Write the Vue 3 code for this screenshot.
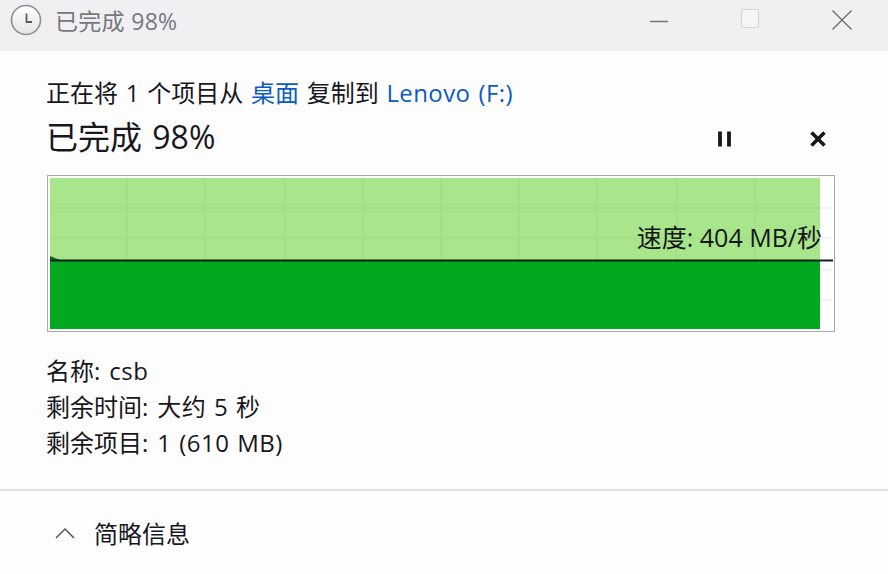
<template>
  <div class="dialog">
    <!-- title bar -->
    <header class="titlebar">
      <svg class="clock" width="32" height="32" viewBox="0 0 32 32">
        <defs>
          <linearGradient id="clockFace" x1="0" y1="0" x2="0" y2="1">
            <stop offset="0" stop-color="#ffffff" />
            <stop offset="1" stop-color="#e4e4e6" />
          </linearGradient>
        </defs>
        <circle cx="16" cy="16" r="14.5" fill="url(#clockFace)" stroke="#8f8f93" stroke-width="1.6" />
        <path d="M16.5 9.5V18H22" fill="none" stroke="#5c5c62" stroke-width="1.8" />
      </svg>
      <span class="title-text">已完成 98%</span>
      <div class="window-buttons">
        <svg class="win-btn" width="24" height="24" viewBox="0 0 24 24">
          <path d="M4 12.5H22" stroke="#77777c" stroke-width="1.5" />
        </svg>
        <svg class="win-btn" width="24" height="24" viewBox="0 0 24 24">
          <rect x="3.5" y="0.5" width="17" height="18" rx="2" fill="#f5f5f6" stroke="#d6d6d8" stroke-width="1.2" />
        </svg>
        <svg class="win-btn" width="24" height="24" viewBox="0 0 24 24">
          <path d="M2.5 1.5L21.5 20.5M21.5 1.5L2.5 20.5" stroke="#66666c" stroke-width="1.2" />
        </svg>
      </div>
    </header>

    <main class="content">
      <div class="copy-line">
        正在将 1 个项目从 <span class="link">桌面</span> 复制到 <span class="link latin">Lenovo (F:)</span>
      </div>

      <div class="heading-row">
        <div class="heading">已完成 98%</div>
        <div class="controls">
          <svg width="18" height="18" viewBox="0 0 18 18">
            <path d="M4 1.5V16.5M13 1.5V16.5" stroke="#17171c" stroke-width="3.8" />
          </svg>
          <svg width="18" height="18" viewBox="0 0 18 18">
            <path d="M2.5 2.5L15.5 15.5M15.5 2.5L2.5 15.5" stroke="#17171c" stroke-width="3.6" />
          </svg>
        </div>
      </div>

      <div class="chart">
        <svg class="chart-svg" width="786" height="155" viewBox="0 0 786 155">
          <rect x="2" y="2" width="770" height="82" fill="#a8e58b" />
          <path v-for="x in gridX" :key="x" :d="`M${x} 2V84`" stroke="#99dc7f" stroke-width="1" />
          <path v-for="y in gridY" :key="y" :d="`M2 ${y}H772`" stroke="#99dc7f" stroke-width="1" />
          <path v-for="y in ticks" :key="'t' + y" :d="`M772 ${y}H784`" stroke="#e6e6e6" stroke-width="1" />
          <rect x="2" y="84" width="770" height="69" fill="#02a81e" />
          <path d="M2 84V80L12 84Z" fill="#066b22" />
          <path d="M2 84.5H785" stroke="#15201a" stroke-width="2" />
        </svg>
        <span class="speed">速度: 404 MB/秒</span>
      </div>

      <dl class="details">
        <div v-for="row in details" :key="row.label" class="detail-row">
          <dt>{{ row.label }}:</dt>
          <dd>{{ row.value }}</dd>
        </div>
      </dl>
    </main>

    <footer class="footer">
      <svg width="20" height="12" viewBox="0 0 20 12">
        <path d="M1 11L10 2L19 11" fill="none" stroke="#55555b" stroke-width="1.5" />
      </svg>
      <span class="footer-text">简略信息</span>
    </footer>
  </div>
</template>

<script setup>
const gridX = [79, 157, 237, 315, 393, 471, 549, 629, 707]
const gridY = [32, 62]
const ticks = [32, 62, 94, 124]

const details = [
  { label: '名称', value: 'csb' },
  { label: '剩余时间', value: '大约 5 秒' },
  { label: '剩余项目', value: '1 (610 MB)' }
]
</script>

<style scoped>
.dialog {
  width: 888px;
  height: 574px;
  display: flex;
  flex-direction: column;
  background: #fdfdfe;
  color: #17171c;
  font-family: "Open Sans", "Noto Sans CJK SC", sans-serif;
  overflow: hidden;
}

.titlebar {
  height: 51px;
  box-sizing: border-box;
  flex: none;
  display: flex;
  align-items: center;
  padding: 0 0 10px 10px;
  background: #f0f0f2;
}

.clock {
  margin: 0 13px 1px 0;
}

.title-text {
  font-size: 23px;
  letter-spacing: 0.3px;
  color: #77777d;
  margin-bottom: 2px;
}

.window-buttons {
  margin-left: auto;
  display: flex;
  gap: 68px;
  padding-right: 34px;
}

.win-btn {
  display: block;
}

.content {
  flex: 1;
  padding: 24px 53px 0 47px;
}

.copy-line {
  font-size: 24px;
  line-height: 36px;
  word-spacing: 1.5px;
  margin-left: -1px;
}

.link {
  color: #0a5cc2;
}

.latin {
  letter-spacing: 0.4px;
}

.heading-row {
  display: flex;
  align-items: center;
  height: 50px;
}

.heading {
  font-size: 32px;
  word-spacing: 2px;
  padding-bottom: 2px;
  margin-left: -1px;
}

.controls {
  margin-left: auto;
  display: flex;
  gap: 75px;
  padding-right: 8px;
  margin-top: 6px;
}

.chart {
  position: relative;
  width: 788px;
  height: 157px;
  box-sizing: border-box;
  margin-top: 14px;
  border: 1px solid #a9a9ad;
  background: #ffffff;
}

.chart-svg {
  display: block;
}

.speed {
  position: absolute;
  right: 12px;
  top: 45px;
  font-size: 25px;
  line-height: 32px;
  color: #15151a;
}

.details {
  margin: 21px 0 0 -1px;
}

.detail-row {
  display: flex;
  gap: 9px;
  font-size: 24px;
  line-height: 36px;
}

.detail-row dt,
.detail-row dd {
  margin: 0;
}

.detail-row dd {
  word-spacing: 1px;
  letter-spacing: 0.5px;
}

.footer {
  height: 83px;
  flex: none;
  display: flex;
  align-items: center;
  gap: 19px;
  padding-left: 55px;
  border-top: 2px solid #e3e3e6;
}

.footer-text {
  font-size: 24px;
}
</style>
